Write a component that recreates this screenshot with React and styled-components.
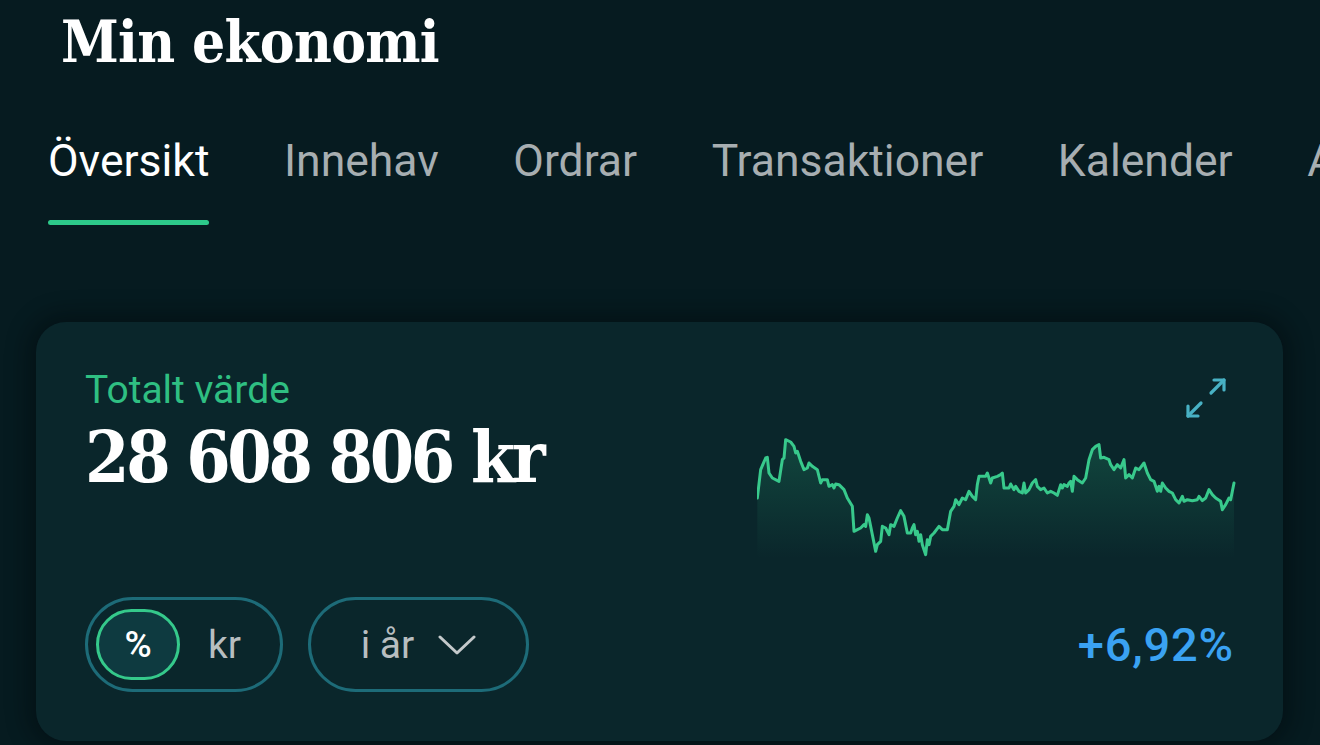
import styled, { createGlobalStyle } from "styled-components";

const GlobalStyle = createGlobalStyle`
  html, body {
    margin: 0;
    padding: 0;
    background: #061b20;
    overflow: hidden;
  }
  body {
    font-family: Roboto, "Liberation Sans", sans-serif;
    color: #ffffff;
  }
`;

const Page = styled.div`
  width: 1320px;
  height: 745px;
  background: #061b20;
  overflow: hidden;
`;

const Titel = styled.h1`
  margin: 0;
  padding: 9px 0 0 61px;
  font-family: "DejaVu Serif", "Liberation Serif", serif;
  font-stretch: condensed;
  font-weight: 700;
  font-size: 58px;
  line-height: 66px;
  letter-spacing: -0.7px;
  color: #ffffff;
`;

const Flikar = styled.nav`
  display: flex;
  gap: 74.5px;
  padding: 60px 0 0 48px;
  white-space: nowrap;
  overflow: hidden;
`;

const Flik = styled.div`
  display: flex;
  flex-direction: column;
  font-size: 44.5px;
  line-height: 52px;
  color: ${(p) => (p.$aktiv ? "#ffffff" : "#a7aeb1")};

  &::after {
    content: "";
    display: block;
    height: 5px;
    margin-top: 33px;
    border-radius: 3px;
    background: ${(p) => (p.$aktiv ? "#2dc98a" : "transparent")};
  }
`;

const Kort = styled.section`
  margin: 97px 37px 0 36px;
  height: 419px;
  box-sizing: border-box;
  padding: 45px 46px 49px 49px;
  background: #0a262b;
  border-radius: 30px;
  box-shadow: 0 0 22px 8px rgba(0, 8, 12, 0.45);
  display: flex;
  flex-direction: column;
`;

const Rad = styled.div`
  display: flex;
  justify-content: space-between;
  align-items: ${(p) => (p.$botten ? "center" : "flex-start")};
  margin-top: ${(p) => (p.$botten ? "auto" : "0")};
`;

const Vanster = styled.div`
  display: flex;
  flex-direction: column;
`;

const Etikett = styled.div`
  font-size: 39px;
  line-height: 46px;
  color: #2fbf82;
`;

const Varde = styled.div`
  font-family: "DejaVu Serif", "Liberation Serif", serif;
  font-stretch: condensed;
  font-weight: 700;
  font-size: 71px;
  line-height: 88px;
  letter-spacing: -3.3px;
  color: #ffffff;
`;

const Knappar = styled.div`
  display: flex;
  gap: 25px;
`;

const Pille = styled.div`
  box-sizing: border-box;
  height: 95px;
  width: ${(p) => p.$bredd}px;
  border: 3px solid #1d6b78;
  border-radius: 48px;
  display: flex;
  align-items: center;
  justify-content: ${(p) => (p.$centrerad ? "center" : "flex-start")};
  padding: 0 8px;
  gap: 24px;
  font-size: 39px;
  color: #b8bec0;
`;

const Val = styled.div`
  box-sizing: border-box;
  width: 84px;
  height: 71px;
  border: 3px solid #35c98b;
  border-radius: 36px;
  background: #0e3a40;
  display: flex;
  align-items: center;
  justify-content: center;
  font-size: 37px;
  font-weight: 500;
  color: #ffffff;
`;

const Enhet = styled.span`
  margin-left: 4px;
`;

const Hoger = styled.div`
  width: 480px;
  display: flex;
  flex-direction: column;
  align-items: flex-end;
`;

const ExpandKnapp = styled.svg`
  width: 44px;
  height: 44px;
  margin: 9px 9px 0 0;
  flex: none;
`;

const Graf = styled.svg`
  width: 480px;
  height: 125px;
  margin-top: 13px;
  display: block;
`;

const Forandring = styled.div`
  margin-right: 3px;
  font-size: 47px;
  line-height: 54px;
  font-weight: 500;
  letter-spacing: 0.8px;
  color: #3aa2f2;
`;

const punkter = [
  [55, 420], [65, 335], [80, 300], [85, 298], [90, 345], [100, 360], [120, 370], [130, 305],
  [135, 300], [140, 245], [155, 252], [165, 265], [170, 285], [175, 280], [185, 310], [195, 335],
  [205, 330], [210, 315], [220, 325], [235, 335], [245, 375], [250, 365], [265, 365], [270, 385],
  [280, 380], [285, 390], [290, 378], [300, 380], [315, 395], [325, 420], [340, 445], [345, 520],
  [355, 515], [365, 510], [375, 500], [380, 505], [385, 470], [390, 480], [400, 530], [410, 580],
  [415, 560], [425, 550], [430, 505], [440, 510], [450, 530], [455, 500], [465, 505], [475, 480],
  [485, 458], [495, 475], [505, 525], [515, 525], [520, 510], [525, 500], [530, 530], [535, 520],
  [540, 550], [545, 530], [550, 560], [560, 590], [565, 545], [570, 560], [575, 535], [585, 525],
  [600, 505], [610, 515], [625, 515], [635, 460], [645, 445], [650, 425], [660, 440], [670, 420],
  [680, 425], [690, 400], [700, 415], [710, 425], [715, 380], [720, 355], [740, 355], [745, 345],
  [755, 375], [760, 360], [775, 355], [785, 350], [790, 345], [795, 390], [810, 390], [815, 378],
  [825, 395], [830, 385], [840, 400], [850, 405], [855, 375], [860, 405], [870, 395], [880, 375],
  [890, 365], [895, 385], [905, 395], [915, 390], [925, 405], [935, 400], [945, 405], [955, 412],
  [965, 380], [970, 390], [975, 380], [985, 385], [990, 375], [995, 370], [1000, 400], [1005, 355],
  [1015, 365], [1030, 375], [1040, 360], [1050, 305], [1060, 275], [1070, 265], [1080, 260],
  [1085, 300], [1095, 298], [1110, 305], [1115, 320], [1125, 335], [1135, 320], [1145, 330],
  [1155, 305], [1160, 360], [1170, 350], [1180, 360], [1190, 330], [1200, 335], [1215, 315],
  [1225, 345], [1235, 365], [1245, 370], [1255, 400], [1260, 385], [1265, 400], [1270, 375],
  [1280, 390], [1290, 400], [1300, 405], [1310, 425], [1320, 435], [1330, 415], [1335, 430],
  [1345, 425], [1360, 428], [1375, 425], [1380, 415], [1390, 428], [1400, 420], [1410, 395],
  [1420, 410], [1430, 420], [1445, 430], [1450, 455], [1460, 440], [1470, 420], [1475, 425],
  [1485, 375],
];

const linje = punkter.map(([x, y], i) => `${i ? "L" : "M"}${x} ${y}`).join(" ");
const yta = `${linje} L1485 600 L55 600 Z`;

const flikar = ["Översikt", "Innehav", "Ordrar", "Transaktioner", "Kalender", "Analys"];

export default function App() {
  return (
    <Page>
      <GlobalStyle />
      <Titel>Min ekonomi</Titel>
      <Flikar>
        {flikar.map((f, i) => (
          <Flik key={f} $aktiv={i === 0}>{f}</Flik>
        ))}
      </Flikar>
      <Kort>
        <Rad>
          <Vanster>
            <Etikett>Totalt värde</Etikett>
            <Varde>28 608 806 kr</Varde>
          </Vanster>
          <Hoger>
            <ExpandKnapp viewBox="0 0 44 44" fill="none" stroke="#48b1c4" strokeWidth="3.2" strokeLinecap="round" strokeLinejoin="round">
              <path d="M27 17 L40 4" />
              <path d="M30 4 L40 4 L40 14" />
              <path d="M17 27 L4 40" />
              <path d="M4 30 L4 40 L14 40" />
            </ExpandKnapp>
            <Graf viewBox="54 225 1440 375" preserveAspectRatio="none">
              <defs>
                <linearGradient id="fyllning" x1="0" y1="0" x2="0" y2="1">
                  <stop offset="0" stopColor="#2fc98a" stopOpacity="0.2" />
                  <stop offset="1" stopColor="#2fc98a" stopOpacity="0" />
                </linearGradient>
              </defs>
              <path d={yta} fill="url(#fyllning)" />
              <path d={linje} fill="none" stroke="#38c98c" strokeWidth="9" strokeLinejoin="round" strokeLinecap="round" />
            </Graf>
          </Hoger>
        </Rad>
        <Rad $botten>
          <Knappar>
            <Pille $bredd={198}>
              <Val>%</Val>
              <Enhet>kr</Enhet>
            </Pille>
            <Pille $bredd={221} $centrerad>
              <span>i år</span>
              <svg width="38" height="20" viewBox="0 0 38 20" fill="none">
                <path d="M2 2 L19 18 L36 2" stroke="#c4c9cb" strokeWidth="3" strokeLinecap="round" strokeLinejoin="round" />
              </svg>
            </Pille>
          </Knappar>
          <Forandring>+6,92%</Forandring>
        </Rad>
      </Kort>
    </Page>
  );
}
